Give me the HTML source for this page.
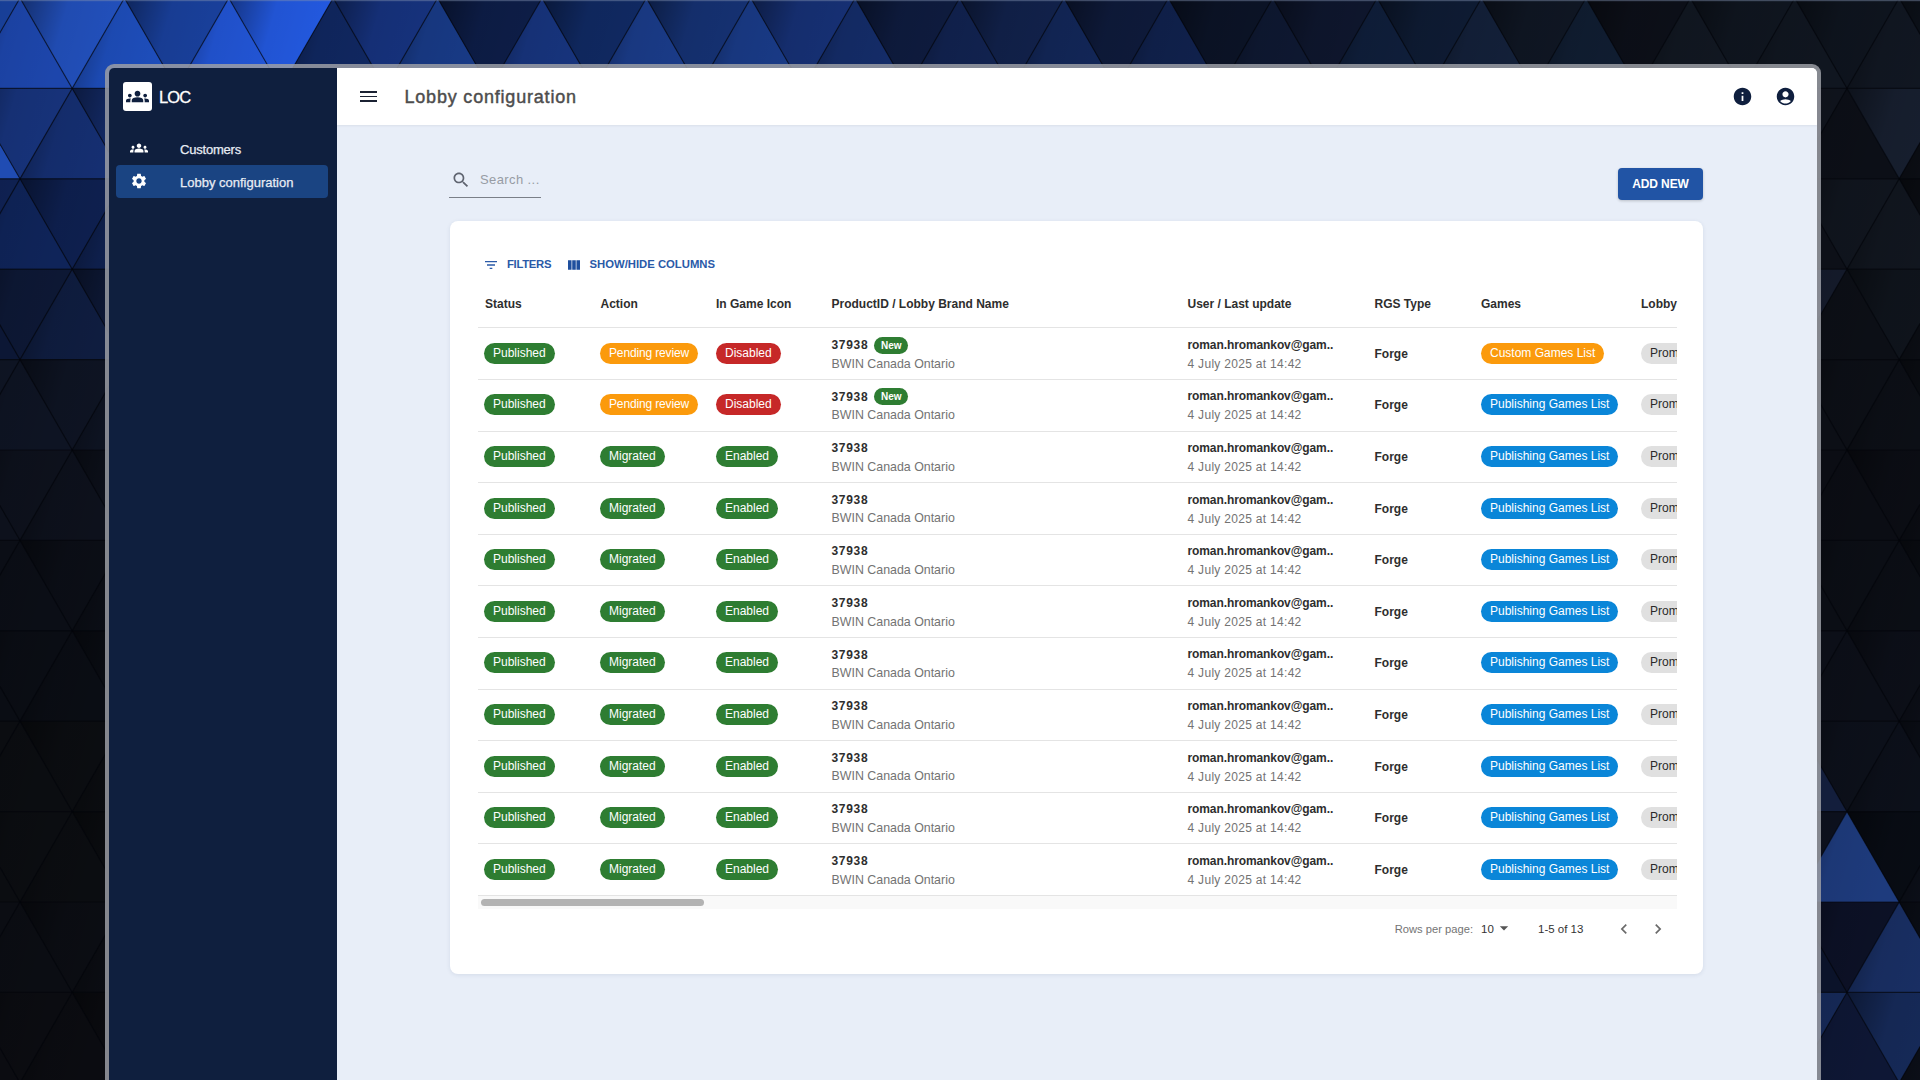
<!DOCTYPE html>
<html><head><meta charset="utf-8">
<style>
*{box-sizing:border-box;margin:0;padding:0}
html,body{width:1920px;height:1080px;overflow:hidden;background:#0b0f18;font-family:"Liberation Sans",sans-serif}
#bg{position:absolute;left:0;top:0;width:1920px;height:1080px}
.abs{position:absolute}
#win{position:absolute;left:105px;top:64px;width:1716px;height:1030px;border:4px solid rgba(155,158,165,.85);border-radius:9px;overflow:hidden;background:#e8eef8;background-clip:padding-box}
#side{position:absolute;left:0;top:0;width:228px;height:1030px;background:#0f1f3e}
#hdr{position:absolute;left:228px;top:0;width:1480px;height:57px;background:#fff;box-shadow:0 1px 2px rgba(30,40,60,.07)}
.t{position:absolute;white-space:nowrap;line-height:1}
.chip{position:absolute;height:21px;border-radius:11px;color:#fff;font-size:12px;line-height:21px;padding:0 9px;white-space:nowrap}
.g{background:#2e7d32}
.o{background:#fb9a0c}
.r{background:#c62828}
.b{background:#0a86d8}
.gr{background:#e0e0e0;color:#2a2a2a}
.hd{font-weight:bold;font-size:12px;color:#2e2e2e}
.line{position:absolute;left:28px;width:1198px;height:1px;background:#e6e6e6}

#main{position:absolute;left:0;top:0}
#card{position:absolute;left:341px;top:153px;width:1253px;height:753px;background:#fff;border-radius:8px;box-shadow:0 1px 4px rgba(40,60,100,.10)}
.row{position:absolute;left:0;width:1227px;height:51.6px}
.row .chip{top:15.6px}
.pid{position:absolute;left:381.5px;top:11.7px;font-size:12px;font-weight:bold;color:#2e2e2e;line-height:1;white-space:nowrap;letter-spacing:.7px}
.new{display:inline-block;vertical-align:top;margin-left:6.1px;margin-top:-2.3px;height:17px;line-height:17px;padding:0 6.5px;letter-spacing:0;border-radius:9px;background:#2e7d32;color:#fff;font-size:10px;font-weight:bold}
.bn{position:absolute;left:381.5px;top:30.4px;font-size:12.4px;color:#737373;line-height:1;white-space:nowrap}
.em{position:absolute;left:737.5px;top:11.5px;font-size:12px;font-weight:bold;color:#2e2e2e;line-height:1;white-space:nowrap;letter-spacing:-.1px}
.dt{position:absolute;left:737.5px;top:30.5px;font-size:12px;color:#737373;line-height:1;white-space:nowrap;letter-spacing:.3px}
.fg{position:absolute;left:924.5px;top:20.5px;font-size:12px;font-weight:bold;color:#2e2e2e;line-height:1;white-space:nowrap}
#clip{position:absolute;left:28px;top:0;width:1199px;height:700px;overflow:hidden}
#clip .row{left:-28px}
.row::before{content:'';position:absolute;left:0;right:0;top:0;height:1px;background:#e4e4e4}
</style></head><body>
<svg id="bg" width="1920" height="1080"><defs><linearGradient id="sh" x1="0" y1="0" x2="1" y2="0.25"><stop offset="0" stop-color="#000" stop-opacity=".42"/><stop offset=".45" stop-color="#000" stop-opacity=".06"/><stop offset="1" stop-color="#000" stop-opacity="0"/></linearGradient></defs><g><polygon points="-84.4,-2.0 20.0,-2.0 -32.2,88.4" fill="#18409a"/><polygon points="-84.4,-2.0 20.0,-2.0 -32.2,88.4" fill="url(#sh)"/>
<polygon points="20.0,-2.0 72.2,88.4 -32.2,88.4" fill="#1d46ac"/><polygon points="20.0,-2.0 72.2,88.4 -32.2,88.4" fill="url(#sh)"/>
<polygon points="20.0,-2.0 124.4,-2.0 72.2,88.4" fill="#2250bc"/><polygon points="20.0,-2.0 124.4,-2.0 72.2,88.4" fill="url(#sh)"/>
<polygon points="124.4,-2.0 176.6,88.4 72.2,88.4" fill="#1e4ebc"/><polygon points="124.4,-2.0 176.6,88.4 72.2,88.4" fill="url(#sh)"/>
<polygon points="124.4,-2.0 228.8,-2.0 176.6,88.4" fill="#19409c"/><polygon points="124.4,-2.0 228.8,-2.0 176.6,88.4" fill="url(#sh)"/>
<polygon points="228.8,-2.0 281.0,88.4 176.6,88.4" fill="#2255d5"/><polygon points="228.8,-2.0 281.0,88.4 176.6,88.4" fill="url(#sh)"/>
<polygon points="228.8,-2.0 333.2,-2.0 281.0,88.4" fill="#2359e0"/><polygon points="228.8,-2.0 333.2,-2.0 281.0,88.4" fill="url(#sh)"/>
<polygon points="333.2,-2.0 385.4,88.4 281.0,88.4" fill="#102760"/><polygon points="333.2,-2.0 385.4,88.4 281.0,88.4" fill="url(#sh)"/>
<polygon points="333.2,-2.0 437.6,-2.0 385.4,88.4" fill="#16327d"/><polygon points="333.2,-2.0 437.6,-2.0 385.4,88.4" fill="url(#sh)"/>
<polygon points="437.6,-2.0 489.8,88.4 385.4,88.4" fill="#183a86"/><polygon points="437.6,-2.0 489.8,88.4 385.4,88.4" fill="url(#sh)"/>
<polygon points="437.6,-2.0 542.0,-2.0 489.8,88.4" fill="#0d1d47"/><polygon points="437.6,-2.0 542.0,-2.0 489.8,88.4" fill="url(#sh)"/>
<polygon points="542.0,-2.0 594.2,88.4 489.8,88.4" fill="#17347d"/><polygon points="542.0,-2.0 594.2,88.4 489.8,88.4" fill="url(#sh)"/>
<polygon points="542.0,-2.0 646.4,-2.0 594.2,88.4" fill="#102962"/><polygon points="542.0,-2.0 646.4,-2.0 594.2,88.4" fill="url(#sh)"/>
<polygon points="646.4,-2.0 698.6,88.4 594.2,88.4" fill="#1a3b88"/><polygon points="646.4,-2.0 698.6,88.4 594.2,88.4" fill="url(#sh)"/>
<polygon points="646.4,-2.0 750.8,-2.0 698.6,88.4" fill="#153172"/><polygon points="646.4,-2.0 750.8,-2.0 698.6,88.4" fill="url(#sh)"/>
<polygon points="750.8,-2.0 803.0,88.4 698.6,88.4" fill="#193a86"/><polygon points="750.8,-2.0 803.0,88.4 698.6,88.4" fill="url(#sh)"/>
<polygon points="750.8,-2.0 855.2,-2.0 803.0,88.4" fill="#163074"/><polygon points="750.8,-2.0 855.2,-2.0 803.0,88.4" fill="url(#sh)"/>
<polygon points="855.2,-2.0 907.4,88.4 803.0,88.4" fill="#142c68"/><polygon points="855.2,-2.0 907.4,88.4 803.0,88.4" fill="url(#sh)"/>
<polygon points="855.2,-2.0 959.6,-2.0 907.4,88.4" fill="#0e1b3e"/><polygon points="855.2,-2.0 959.6,-2.0 907.4,88.4" fill="url(#sh)"/>
<polygon points="959.6,-2.0 1011.8,88.4 907.4,88.4" fill="#11224f"/><polygon points="959.6,-2.0 1011.8,88.4 907.4,88.4" fill="url(#sh)"/>
<polygon points="959.6,-2.0 1064.0,-2.0 1011.8,88.4" fill="#11214a"/><polygon points="959.6,-2.0 1064.0,-2.0 1011.8,88.4" fill="url(#sh)"/>
<polygon points="1064.0,-2.0 1116.2,88.4 1011.8,88.4" fill="#122657"/><polygon points="1064.0,-2.0 1116.2,88.4 1011.8,88.4" fill="url(#sh)"/>
<polygon points="1064.0,-2.0 1168.4,-2.0 1116.2,88.4" fill="#0e1a3a"/><polygon points="1064.0,-2.0 1168.4,-2.0 1116.2,88.4" fill="url(#sh)"/>
<polygon points="1168.4,-2.0 1220.6,88.4 1116.2,88.4" fill="#10214c"/><polygon points="1168.4,-2.0 1220.6,88.4 1116.2,88.4" fill="url(#sh)"/>
<polygon points="1168.4,-2.0 1272.8,-2.0 1220.6,88.4" fill="#0b1326"/><polygon points="1168.4,-2.0 1272.8,-2.0 1220.6,88.4" fill="url(#sh)"/>
<polygon points="1272.8,-2.0 1325.0,88.4 1220.6,88.4" fill="#0e1831"/><polygon points="1272.8,-2.0 1325.0,88.4 1220.6,88.4" fill="url(#sh)"/>
<polygon points="1272.8,-2.0 1377.2,-2.0 1325.0,88.4" fill="#0e162d"/><polygon points="1272.8,-2.0 1377.2,-2.0 1325.0,88.4" fill="url(#sh)"/>
<polygon points="1377.2,-2.0 1429.4,88.4 1325.0,88.4" fill="#0f1e3a"/><polygon points="1377.2,-2.0 1429.4,88.4 1325.0,88.4" fill="url(#sh)"/>
<polygon points="1377.2,-2.0 1481.6,-2.0 1429.4,88.4" fill="#0e1b33"/><polygon points="1377.2,-2.0 1481.6,-2.0 1429.4,88.4" fill="url(#sh)"/>
<polygon points="1481.6,-2.0 1533.8,88.4 1429.4,88.4" fill="#132039"/><polygon points="1481.6,-2.0 1533.8,88.4 1429.4,88.4" fill="url(#sh)"/>
<polygon points="1481.6,-2.0 1586.0,-2.0 1533.8,88.4" fill="#0f1623"/><polygon points="1481.6,-2.0 1586.0,-2.0 1533.8,88.4" fill="url(#sh)"/>
<polygon points="1586.0,-2.0 1638.2,88.4 1533.8,88.4" fill="#101d31"/><polygon points="1586.0,-2.0 1638.2,88.4 1533.8,88.4" fill="url(#sh)"/>
<polygon points="1586.0,-2.0 1690.4,-2.0 1638.2,88.4" fill="#0c0f18"/><polygon points="1586.0,-2.0 1690.4,-2.0 1638.2,88.4" fill="url(#sh)"/>
<polygon points="1690.4,-2.0 1742.6,88.4 1638.2,88.4" fill="#111721"/><polygon points="1690.4,-2.0 1742.6,88.4 1638.2,88.4" fill="url(#sh)"/>
<polygon points="1690.4,-2.0 1794.8,-2.0 1742.6,88.4" fill="#0f151f"/><polygon points="1690.4,-2.0 1794.8,-2.0 1742.6,88.4" fill="url(#sh)"/>
<polygon points="1794.8,-2.0 1847.0,88.4 1742.6,88.4" fill="#101620"/><polygon points="1794.8,-2.0 1847.0,88.4 1742.6,88.4" fill="url(#sh)"/>
<polygon points="1794.8,-2.0 1899.2,-2.0 1847.0,88.4" fill="#0e141e"/><polygon points="1794.8,-2.0 1899.2,-2.0 1847.0,88.4" fill="url(#sh)"/>
<polygon points="1899.2,-2.0 1951.4,88.4 1847.0,88.4" fill="#111722"/><polygon points="1899.2,-2.0 1951.4,88.4 1847.0,88.4" fill="url(#sh)"/>
<polygon points="1899.2,-2.0 2003.6,-2.0 1951.4,88.4" fill="#0e141e"/><polygon points="1899.2,-2.0 2003.6,-2.0 1951.4,88.4" fill="url(#sh)"/>
<polygon points="-32.2,88.4 20.0,178.8 -84.4,178.8" fill="#204cb3"/><polygon points="-32.2,88.4 20.0,178.8 -84.4,178.8" fill="url(#sh)"/>
<polygon points="-32.2,88.4 72.2,88.4 20.0,178.8" fill="#17337b"/><polygon points="-32.2,88.4 72.2,88.4 20.0,178.8" fill="url(#sh)"/>
<polygon points="72.2,88.4 124.4,178.8 20.0,178.8" fill="#152f72"/><polygon points="72.2,88.4 124.4,178.8 20.0,178.8" fill="url(#sh)"/>
<polygon points="72.2,88.4 176.6,88.4 124.4,178.8" fill="#142c6b"/><polygon points="72.2,88.4 176.6,88.4 124.4,178.8" fill="url(#sh)"/>
<polygon points="1742.6,88.4 1847.0,88.4 1794.8,178.8" fill="#0f131c"/><polygon points="1742.6,88.4 1847.0,88.4 1794.8,178.8" fill="url(#sh)"/>
<polygon points="1847.0,88.4 1899.2,178.8 1794.8,178.8" fill="#0c0f17"/><polygon points="1847.0,88.4 1899.2,178.8 1794.8,178.8" fill="url(#sh)"/>
<polygon points="1847.0,88.4 1951.4,88.4 1899.2,178.8" fill="#171f2f"/><polygon points="1847.0,88.4 1951.4,88.4 1899.2,178.8" fill="url(#sh)"/>
<polygon points="1951.4,88.4 2003.6,178.8 1899.2,178.8" fill="#0c0f16"/><polygon points="1951.4,88.4 2003.6,178.8 1899.2,178.8" fill="url(#sh)"/>
<polygon points="-84.4,178.8 20.0,178.8 -32.2,269.2" fill="#0f2152"/><polygon points="-84.4,178.8 20.0,178.8 -32.2,269.2" fill="url(#sh)"/>
<polygon points="20.0,178.8 72.2,269.2 -32.2,269.2" fill="#0f2459"/><polygon points="20.0,178.8 72.2,269.2 -32.2,269.2" fill="url(#sh)"/>
<polygon points="20.0,178.8 124.4,178.8 72.2,269.2" fill="#0e2050"/><polygon points="20.0,178.8 124.4,178.8 72.2,269.2" fill="url(#sh)"/>
<polygon points="124.4,178.8 176.6,269.2 72.2,269.2" fill="#0f2150"/><polygon points="124.4,178.8 176.6,269.2 72.2,269.2" fill="url(#sh)"/>
<polygon points="1794.8,178.8 1847.0,269.2 1742.6,269.2" fill="#0d1018"/><polygon points="1794.8,178.8 1847.0,269.2 1742.6,269.2" fill="url(#sh)"/>
<polygon points="1794.8,178.8 1899.2,178.8 1847.0,269.2" fill="#10151e"/><polygon points="1794.8,178.8 1899.2,178.8 1847.0,269.2" fill="url(#sh)"/>
<polygon points="1899.2,178.8 1951.4,269.2 1847.0,269.2" fill="#11161f"/><polygon points="1899.2,178.8 1951.4,269.2 1847.0,269.2" fill="url(#sh)"/>
<polygon points="1899.2,178.8 2003.6,178.8 1951.4,269.2" fill="#0c0f16"/><polygon points="1899.2,178.8 2003.6,178.8 1951.4,269.2" fill="url(#sh)"/>
<polygon points="-32.2,269.2 20.0,359.6 -84.4,359.6" fill="#0c1735"/><polygon points="-32.2,269.2 20.0,359.6 -84.4,359.6" fill="url(#sh)"/>
<polygon points="-32.2,269.2 72.2,269.2 20.0,359.6" fill="#0d1835"/><polygon points="-32.2,269.2 72.2,269.2 20.0,359.6" fill="url(#sh)"/>
<polygon points="72.2,269.2 124.4,359.6 20.0,359.6" fill="#0f1d40"/><polygon points="72.2,269.2 124.4,359.6 20.0,359.6" fill="url(#sh)"/>
<polygon points="72.2,269.2 176.6,269.2 124.4,359.6" fill="#0e1a3a"/><polygon points="72.2,269.2 176.6,269.2 124.4,359.6" fill="url(#sh)"/>
<polygon points="1742.6,269.2 1847.0,269.2 1794.8,359.6" fill="#141a2a"/><polygon points="1742.6,269.2 1847.0,269.2 1794.8,359.6" fill="url(#sh)"/>
<polygon points="1847.0,269.2 1899.2,359.6 1794.8,359.6" fill="#0c0f16"/><polygon points="1847.0,269.2 1899.2,359.6 1794.8,359.6" fill="url(#sh)"/>
<polygon points="1847.0,269.2 1951.4,269.2 1899.2,359.6" fill="#0f141c"/><polygon points="1847.0,269.2 1951.4,269.2 1899.2,359.6" fill="url(#sh)"/>
<polygon points="1951.4,269.2 2003.6,359.6 1899.2,359.6" fill="#0c0f16"/><polygon points="1951.4,269.2 2003.6,359.6 1899.2,359.6" fill="url(#sh)"/>
<polygon points="-84.4,359.6 20.0,359.6 -32.2,450.0" fill="#0e1423"/><polygon points="-84.4,359.6 20.0,359.6 -32.2,450.0" fill="url(#sh)"/>
<polygon points="20.0,359.6 72.2,450.0 -32.2,450.0" fill="#0e1423"/><polygon points="20.0,359.6 72.2,450.0 -32.2,450.0" fill="url(#sh)"/>
<polygon points="20.0,359.6 124.4,359.6 72.2,450.0" fill="#0e1423"/><polygon points="20.0,359.6 124.4,359.6 72.2,450.0" fill="url(#sh)"/>
<polygon points="124.4,359.6 176.6,450.0 72.2,450.0" fill="#0e1423"/><polygon points="124.4,359.6 176.6,450.0 72.2,450.0" fill="url(#sh)"/>
<polygon points="1794.8,359.6 1847.0,450.0 1742.6,450.0" fill="#0c0f16"/><polygon points="1794.8,359.6 1847.0,450.0 1742.6,450.0" fill="url(#sh)"/>
<polygon points="1794.8,359.6 1899.2,359.6 1847.0,450.0" fill="#0c0f16"/><polygon points="1794.8,359.6 1899.2,359.6 1847.0,450.0" fill="url(#sh)"/>
<polygon points="1899.2,359.6 1951.4,450.0 1847.0,450.0" fill="#0c0f16"/><polygon points="1899.2,359.6 1951.4,450.0 1847.0,450.0" fill="url(#sh)"/>
<polygon points="1899.2,359.6 2003.6,359.6 1951.4,450.0" fill="#0c0f16"/><polygon points="1899.2,359.6 2003.6,359.6 1951.4,450.0" fill="url(#sh)"/>
<polygon points="-32.2,450.0 20.0,540.4 -84.4,540.4" fill="#0d111c"/><polygon points="-32.2,450.0 20.0,540.4 -84.4,540.4" fill="url(#sh)"/>
<polygon points="-32.2,450.0 72.2,450.0 20.0,540.4" fill="#0d111c"/><polygon points="-32.2,450.0 72.2,450.0 20.0,540.4" fill="url(#sh)"/>
<polygon points="72.2,450.0 124.4,540.4 20.0,540.4" fill="#0d111c"/><polygon points="72.2,450.0 124.4,540.4 20.0,540.4" fill="url(#sh)"/>
<polygon points="72.2,450.0 176.6,450.0 124.4,540.4" fill="#0d111c"/><polygon points="72.2,450.0 176.6,450.0 124.4,540.4" fill="url(#sh)"/>
<polygon points="1742.6,450.0 1847.0,450.0 1794.8,540.4" fill="#0b0d14"/><polygon points="1742.6,450.0 1847.0,450.0 1794.8,540.4" fill="url(#sh)"/>
<polygon points="1847.0,450.0 1899.2,540.4 1794.8,540.4" fill="#0b0d14"/><polygon points="1847.0,450.0 1899.2,540.4 1794.8,540.4" fill="url(#sh)"/>
<polygon points="1847.0,450.0 1951.4,450.0 1899.2,540.4" fill="#0b0d14"/><polygon points="1847.0,450.0 1951.4,450.0 1899.2,540.4" fill="url(#sh)"/>
<polygon points="1951.4,450.0 2003.6,540.4 1899.2,540.4" fill="#0b0d14"/><polygon points="1951.4,450.0 2003.6,540.4 1899.2,540.4" fill="url(#sh)"/>
<polygon points="-84.4,540.4 20.0,540.4 -32.2,630.8" fill="#0b0e16"/><polygon points="-84.4,540.4 20.0,540.4 -32.2,630.8" fill="url(#sh)"/>
<polygon points="20.0,540.4 72.2,630.8 -32.2,630.8" fill="#0b0e16"/><polygon points="20.0,540.4 72.2,630.8 -32.2,630.8" fill="url(#sh)"/>
<polygon points="20.0,540.4 124.4,540.4 72.2,630.8" fill="#0b0e16"/><polygon points="20.0,540.4 124.4,540.4 72.2,630.8" fill="url(#sh)"/>
<polygon points="124.4,540.4 176.6,630.8 72.2,630.8" fill="#0b0e16"/><polygon points="124.4,540.4 176.6,630.8 72.2,630.8" fill="url(#sh)"/>
<polygon points="1794.8,540.4 1847.0,630.8 1742.6,630.8" fill="#0b0e15"/><polygon points="1794.8,540.4 1847.0,630.8 1742.6,630.8" fill="url(#sh)"/>
<polygon points="1794.8,540.4 1899.2,540.4 1847.0,630.8" fill="#0b0e15"/><polygon points="1794.8,540.4 1899.2,540.4 1847.0,630.8" fill="url(#sh)"/>
<polygon points="1899.2,540.4 1951.4,630.8 1847.0,630.8" fill="#0b0e15"/><polygon points="1899.2,540.4 1951.4,630.8 1847.0,630.8" fill="url(#sh)"/>
<polygon points="1899.2,540.4 2003.6,540.4 1951.4,630.8" fill="#0b0e15"/><polygon points="1899.2,540.4 2003.6,540.4 1951.4,630.8" fill="url(#sh)"/>
<polygon points="-32.2,630.8 20.0,721.2 -84.4,721.2" fill="#0a0d14"/><polygon points="-32.2,630.8 20.0,721.2 -84.4,721.2" fill="url(#sh)"/>
<polygon points="-32.2,630.8 72.2,630.8 20.0,721.2" fill="#0a0d14"/><polygon points="-32.2,630.8 72.2,630.8 20.0,721.2" fill="url(#sh)"/>
<polygon points="72.2,630.8 124.4,721.2 20.0,721.2" fill="#0a0d14"/><polygon points="72.2,630.8 124.4,721.2 20.0,721.2" fill="url(#sh)"/>
<polygon points="72.2,630.8 176.6,630.8 124.4,721.2" fill="#0a0d14"/><polygon points="72.2,630.8 176.6,630.8 124.4,721.2" fill="url(#sh)"/>
<polygon points="1742.6,630.8 1847.0,630.8 1794.8,721.2" fill="#0c0f18"/><polygon points="1742.6,630.8 1847.0,630.8 1794.8,721.2" fill="url(#sh)"/>
<polygon points="1847.0,630.8 1899.2,721.2 1794.8,721.2" fill="#0c0f18"/><polygon points="1847.0,630.8 1899.2,721.2 1794.8,721.2" fill="url(#sh)"/>
<polygon points="1847.0,630.8 1951.4,630.8 1899.2,721.2" fill="#0c0f18"/><polygon points="1847.0,630.8 1951.4,630.8 1899.2,721.2" fill="url(#sh)"/>
<polygon points="1951.4,630.8 2003.6,721.2 1899.2,721.2" fill="#0c0f18"/><polygon points="1951.4,630.8 2003.6,721.2 1899.2,721.2" fill="url(#sh)"/>
<polygon points="-84.4,721.2 20.0,721.2 -32.2,811.6" fill="#0b0d11"/><polygon points="-84.4,721.2 20.0,721.2 -32.2,811.6" fill="url(#sh)"/>
<polygon points="20.0,721.2 72.2,811.6 -32.2,811.6" fill="#0b0d11"/><polygon points="20.0,721.2 72.2,811.6 -32.2,811.6" fill="url(#sh)"/>
<polygon points="20.0,721.2 124.4,721.2 72.2,811.6" fill="#0b0d11"/><polygon points="20.0,721.2 124.4,721.2 72.2,811.6" fill="url(#sh)"/>
<polygon points="124.4,721.2 176.6,811.6 72.2,811.6" fill="#0b0d11"/><polygon points="124.4,721.2 176.6,811.6 72.2,811.6" fill="url(#sh)"/>
<polygon points="1794.8,721.2 1847.0,811.6 1742.6,811.6" fill="#131e3c"/><polygon points="1794.8,721.2 1847.0,811.6 1742.6,811.6" fill="url(#sh)"/>
<polygon points="1794.8,721.2 1899.2,721.2 1847.0,811.6" fill="#0c101a"/><polygon points="1794.8,721.2 1899.2,721.2 1847.0,811.6" fill="url(#sh)"/>
<polygon points="1899.2,721.2 1951.4,811.6 1847.0,811.6" fill="#0c101a"/><polygon points="1899.2,721.2 1951.4,811.6 1847.0,811.6" fill="url(#sh)"/>
<polygon points="1899.2,721.2 2003.6,721.2 1951.4,811.6" fill="#0c101a"/><polygon points="1899.2,721.2 2003.6,721.2 1951.4,811.6" fill="url(#sh)"/>
<polygon points="-32.2,811.6 20.0,902.0 -84.4,902.0" fill="#0b0d11"/><polygon points="-32.2,811.6 20.0,902.0 -84.4,902.0" fill="url(#sh)"/>
<polygon points="-32.2,811.6 72.2,811.6 20.0,902.0" fill="#0b0d11"/><polygon points="-32.2,811.6 72.2,811.6 20.0,902.0" fill="url(#sh)"/>
<polygon points="72.2,811.6 124.4,902.0 20.0,902.0" fill="#0b0d11"/><polygon points="72.2,811.6 124.4,902.0 20.0,902.0" fill="url(#sh)"/>
<polygon points="72.2,811.6 176.6,811.6 124.4,902.0" fill="#0b0d11"/><polygon points="72.2,811.6 176.6,811.6 124.4,902.0" fill="url(#sh)"/>
<polygon points="1742.6,811.6 1847.0,811.6 1794.8,902.0" fill="#0c101d"/><polygon points="1742.6,811.6 1847.0,811.6 1794.8,902.0" fill="url(#sh)"/>
<polygon points="1847.0,811.6 1899.2,902.0 1794.8,902.0" fill="#1e3b7d"/><polygon points="1847.0,811.6 1899.2,902.0 1794.8,902.0" fill="url(#sh)"/>
<polygon points="1847.0,811.6 1951.4,811.6 1899.2,902.0" fill="#080c14"/><polygon points="1847.0,811.6 1951.4,811.6 1899.2,902.0" fill="url(#sh)"/>
<polygon points="1951.4,811.6 2003.6,902.0 1899.2,902.0" fill="#0c101a"/><polygon points="1951.4,811.6 2003.6,902.0 1899.2,902.0" fill="url(#sh)"/>
<polygon points="-84.4,902.0 20.0,902.0 -32.2,992.4" fill="#0b0d13"/><polygon points="-84.4,902.0 20.0,902.0 -32.2,992.4" fill="url(#sh)"/>
<polygon points="20.0,902.0 72.2,992.4 -32.2,992.4" fill="#0b0d13"/><polygon points="20.0,902.0 72.2,992.4 -32.2,992.4" fill="url(#sh)"/>
<polygon points="20.0,902.0 124.4,902.0 72.2,992.4" fill="#0b0d13"/><polygon points="20.0,902.0 124.4,902.0 72.2,992.4" fill="url(#sh)"/>
<polygon points="124.4,902.0 176.6,992.4 72.2,992.4" fill="#0b0d13"/><polygon points="124.4,902.0 176.6,992.4 72.2,992.4" fill="url(#sh)"/>
<polygon points="1794.8,902.0 1847.0,992.4 1742.6,992.4" fill="#0b132a"/><polygon points="1794.8,902.0 1847.0,992.4 1742.6,992.4" fill="url(#sh)"/>
<polygon points="1794.8,902.0 1899.2,902.0 1847.0,992.4" fill="#0c1126"/><polygon points="1794.8,902.0 1899.2,902.0 1847.0,992.4" fill="url(#sh)"/>
<polygon points="1899.2,902.0 1951.4,992.4 1847.0,992.4" fill="#192f64"/><polygon points="1899.2,902.0 1951.4,992.4 1847.0,992.4" fill="url(#sh)"/>
<polygon points="1899.2,902.0 2003.6,902.0 1951.4,992.4" fill="#0c101a"/><polygon points="1899.2,902.0 2003.6,902.0 1951.4,992.4" fill="url(#sh)"/>
<polygon points="-32.2,992.4 20.0,1082.8 -84.4,1082.8" fill="#0b0c11"/><polygon points="-32.2,992.4 20.0,1082.8 -84.4,1082.8" fill="url(#sh)"/>
<polygon points="-32.2,992.4 72.2,992.4 20.0,1082.8" fill="#0b0c11"/><polygon points="-32.2,992.4 72.2,992.4 20.0,1082.8" fill="url(#sh)"/>
<polygon points="72.2,992.4 124.4,1082.8 20.0,1082.8" fill="#0b0c11"/><polygon points="72.2,992.4 124.4,1082.8 20.0,1082.8" fill="url(#sh)"/>
<polygon points="72.2,992.4 176.6,992.4 124.4,1082.8" fill="#0b0c11"/><polygon points="72.2,992.4 176.6,992.4 124.4,1082.8" fill="url(#sh)"/>
<polygon points="1742.6,992.4 1847.0,992.4 1794.8,1082.8" fill="#152855"/><polygon points="1742.6,992.4 1847.0,992.4 1794.8,1082.8" fill="url(#sh)"/>
<polygon points="1847.0,992.4 1899.2,1082.8 1794.8,1082.8" fill="#0e1735"/><polygon points="1847.0,992.4 1899.2,1082.8 1794.8,1082.8" fill="url(#sh)"/>
<polygon points="1847.0,992.4 1951.4,992.4 1899.2,1082.8" fill="#162a59"/><polygon points="1847.0,992.4 1951.4,992.4 1899.2,1082.8" fill="url(#sh)"/>
<polygon points="1951.4,992.4 2003.6,1082.8 1899.2,1082.8" fill="#0c101a"/><polygon points="1951.4,992.4 2003.6,1082.8 1899.2,1082.8" fill="url(#sh)"/>
<polygon points="-84.4,1082.8 20.0,1082.8 -32.2,1173.2" fill="#0b0c11"/><polygon points="-84.4,1082.8 20.0,1082.8 -32.2,1173.2" fill="url(#sh)"/>
<polygon points="20.0,1082.8 72.2,1173.2 -32.2,1173.2" fill="#0b0c11"/><polygon points="20.0,1082.8 72.2,1173.2 -32.2,1173.2" fill="url(#sh)"/>
<polygon points="20.0,1082.8 124.4,1082.8 72.2,1173.2" fill="#0b0c11"/><polygon points="20.0,1082.8 124.4,1082.8 72.2,1173.2" fill="url(#sh)"/>
<polygon points="124.4,1082.8 176.6,1173.2 72.2,1173.2" fill="#0b0c11"/><polygon points="124.4,1082.8 176.6,1173.2 72.2,1173.2" fill="url(#sh)"/>
<polygon points="1794.8,1082.8 1847.0,1173.2 1742.6,1173.2" fill="#0e1735"/><polygon points="1794.8,1082.8 1847.0,1173.2 1742.6,1173.2" fill="url(#sh)"/>
<polygon points="1794.8,1082.8 1899.2,1082.8 1847.0,1173.2" fill="#162a59"/><polygon points="1794.8,1082.8 1899.2,1082.8 1847.0,1173.2" fill="url(#sh)"/>
<polygon points="1899.2,1082.8 1951.4,1173.2 1847.0,1173.2" fill="#162a59"/><polygon points="1899.2,1082.8 1951.4,1173.2 1847.0,1173.2" fill="url(#sh)"/>
<polygon points="1899.2,1082.8 2003.6,1082.8 1951.4,1173.2" fill="#0c101a"/><polygon points="1899.2,1082.8 2003.6,1082.8 1951.4,1173.2" fill="url(#sh)"/></g><g stroke="#03050a" stroke-opacity=".6" stroke-width="1.2"><line x1="0" y1="-2.0" x2="1920" y2="-2.0"/>
<line x1="0" y1="88.4" x2="1920" y2="88.4"/>
<line x1="0" y1="178.8" x2="1920" y2="178.8"/>
<line x1="0" y1="269.2" x2="1920" y2="269.2"/>
<line x1="0" y1="359.6" x2="1920" y2="359.6"/>
<line x1="0" y1="450.0" x2="1920" y2="450.0"/>
<line x1="0" y1="540.4" x2="1920" y2="540.4"/>
<line x1="0" y1="630.8" x2="1920" y2="630.8"/>
<line x1="0" y1="721.2" x2="1920" y2="721.2"/>
<line x1="0" y1="811.6" x2="1920" y2="811.6"/>
<line x1="0" y1="902.0" x2="1920" y2="902.0"/>
<line x1="0" y1="992.4" x2="1920" y2="992.4"/>
<line x1="0" y1="1082.8" x2="1920" y2="1082.8"/>
<line x1="0" y1="1173.2" x2="1920" y2="1173.2"/>
<line x1="-2590.0" y1="-2.0" x2="-1954.8" y2="1098.0"/>
<line x1="-2590.0" y1="-2.0" x2="-3225.2" y2="1098.0"/>
<line x1="-2485.6" y1="-2.0" x2="-1850.4" y2="1098.0"/>
<line x1="-2485.6" y1="-2.0" x2="-3120.8" y2="1098.0"/>
<line x1="-2381.2" y1="-2.0" x2="-1746.0" y2="1098.0"/>
<line x1="-2381.2" y1="-2.0" x2="-3016.4" y2="1098.0"/>
<line x1="-2276.8" y1="-2.0" x2="-1641.6" y2="1098.0"/>
<line x1="-2276.8" y1="-2.0" x2="-2912.0" y2="1098.0"/>
<line x1="-2172.4" y1="-2.0" x2="-1537.2" y2="1098.0"/>
<line x1="-2172.4" y1="-2.0" x2="-2807.6" y2="1098.0"/>
<line x1="-2068.0" y1="-2.0" x2="-1432.8" y2="1098.0"/>
<line x1="-2068.0" y1="-2.0" x2="-2703.2" y2="1098.0"/>
<line x1="-1963.6" y1="-2.0" x2="-1328.4" y2="1098.0"/>
<line x1="-1963.6" y1="-2.0" x2="-2598.8" y2="1098.0"/>
<line x1="-1859.2" y1="-2.0" x2="-1224.0" y2="1098.0"/>
<line x1="-1859.2" y1="-2.0" x2="-2494.4" y2="1098.0"/>
<line x1="-1754.8" y1="-2.0" x2="-1119.6" y2="1098.0"/>
<line x1="-1754.8" y1="-2.0" x2="-2390.0" y2="1098.0"/>
<line x1="-1650.4" y1="-2.0" x2="-1015.2" y2="1098.0"/>
<line x1="-1650.4" y1="-2.0" x2="-2285.6" y2="1098.0"/>
<line x1="-1546.0" y1="-2.0" x2="-910.8" y2="1098.0"/>
<line x1="-1546.0" y1="-2.0" x2="-2181.2" y2="1098.0"/>
<line x1="-1441.6" y1="-2.0" x2="-806.4" y2="1098.0"/>
<line x1="-1441.6" y1="-2.0" x2="-2076.8" y2="1098.0"/>
<line x1="-1337.2" y1="-2.0" x2="-702.0" y2="1098.0"/>
<line x1="-1337.2" y1="-2.0" x2="-1972.4" y2="1098.0"/>
<line x1="-1232.8" y1="-2.0" x2="-597.6" y2="1098.0"/>
<line x1="-1232.8" y1="-2.0" x2="-1868.0" y2="1098.0"/>
<line x1="-1128.4" y1="-2.0" x2="-493.2" y2="1098.0"/>
<line x1="-1128.4" y1="-2.0" x2="-1763.6" y2="1098.0"/>
<line x1="-1024.0" y1="-2.0" x2="-388.8" y2="1098.0"/>
<line x1="-1024.0" y1="-2.0" x2="-1659.2" y2="1098.0"/>
<line x1="-919.6" y1="-2.0" x2="-284.4" y2="1098.0"/>
<line x1="-919.6" y1="-2.0" x2="-1554.8" y2="1098.0"/>
<line x1="-815.2" y1="-2.0" x2="-180.0" y2="1098.0"/>
<line x1="-815.2" y1="-2.0" x2="-1450.4" y2="1098.0"/>
<line x1="-710.8" y1="-2.0" x2="-75.6" y2="1098.0"/>
<line x1="-710.8" y1="-2.0" x2="-1346.0" y2="1098.0"/>
<line x1="-606.4" y1="-2.0" x2="28.8" y2="1098.0"/>
<line x1="-606.4" y1="-2.0" x2="-1241.6" y2="1098.0"/>
<line x1="-502.0" y1="-2.0" x2="133.2" y2="1098.0"/>
<line x1="-502.0" y1="-2.0" x2="-1137.2" y2="1098.0"/>
<line x1="-397.6" y1="-2.0" x2="237.6" y2="1098.0"/>
<line x1="-397.6" y1="-2.0" x2="-1032.8" y2="1098.0"/>
<line x1="-293.2" y1="-2.0" x2="342.0" y2="1098.0"/>
<line x1="-293.2" y1="-2.0" x2="-928.4" y2="1098.0"/>
<line x1="-188.8" y1="-2.0" x2="446.4" y2="1098.0"/>
<line x1="-188.8" y1="-2.0" x2="-824.0" y2="1098.0"/>
<line x1="-84.4" y1="-2.0" x2="550.8" y2="1098.0"/>
<line x1="-84.4" y1="-2.0" x2="-719.6" y2="1098.0"/>
<line x1="20.0" y1="-2.0" x2="655.2" y2="1098.0"/>
<line x1="20.0" y1="-2.0" x2="-615.2" y2="1098.0"/>
<line x1="124.4" y1="-2.0" x2="759.6" y2="1098.0"/>
<line x1="124.4" y1="-2.0" x2="-510.8" y2="1098.0"/>
<line x1="228.8" y1="-2.0" x2="864.0" y2="1098.0"/>
<line x1="228.8" y1="-2.0" x2="-406.4" y2="1098.0"/>
<line x1="333.2" y1="-2.0" x2="968.4" y2="1098.0"/>
<line x1="333.2" y1="-2.0" x2="-302.0" y2="1098.0"/>
<line x1="437.6" y1="-2.0" x2="1072.8" y2="1098.0"/>
<line x1="437.6" y1="-2.0" x2="-197.6" y2="1098.0"/>
<line x1="542.0" y1="-2.0" x2="1177.2" y2="1098.0"/>
<line x1="542.0" y1="-2.0" x2="-93.2" y2="1098.0"/>
<line x1="646.4" y1="-2.0" x2="1281.6" y2="1098.0"/>
<line x1="646.4" y1="-2.0" x2="11.2" y2="1098.0"/>
<line x1="750.8" y1="-2.0" x2="1386.0" y2="1098.0"/>
<line x1="750.8" y1="-2.0" x2="115.6" y2="1098.0"/>
<line x1="855.2" y1="-2.0" x2="1490.4" y2="1098.0"/>
<line x1="855.2" y1="-2.0" x2="220.0" y2="1098.0"/>
<line x1="959.6" y1="-2.0" x2="1594.8" y2="1098.0"/>
<line x1="959.6" y1="-2.0" x2="324.4" y2="1098.0"/>
<line x1="1064.0" y1="-2.0" x2="1699.2" y2="1098.0"/>
<line x1="1064.0" y1="-2.0" x2="428.8" y2="1098.0"/>
<line x1="1168.4" y1="-2.0" x2="1803.6" y2="1098.0"/>
<line x1="1168.4" y1="-2.0" x2="533.2" y2="1098.0"/>
<line x1="1272.8" y1="-2.0" x2="1908.0" y2="1098.0"/>
<line x1="1272.8" y1="-2.0" x2="637.6" y2="1098.0"/>
<line x1="1377.2" y1="-2.0" x2="2012.4" y2="1098.0"/>
<line x1="1377.2" y1="-2.0" x2="742.0" y2="1098.0"/>
<line x1="1481.6" y1="-2.0" x2="2116.8" y2="1098.0"/>
<line x1="1481.6" y1="-2.0" x2="846.4" y2="1098.0"/>
<line x1="1586.0" y1="-2.0" x2="2221.2" y2="1098.0"/>
<line x1="1586.0" y1="-2.0" x2="950.8" y2="1098.0"/>
<line x1="1690.4" y1="-2.0" x2="2325.6" y2="1098.0"/>
<line x1="1690.4" y1="-2.0" x2="1055.2" y2="1098.0"/>
<line x1="1794.8" y1="-2.0" x2="2430.0" y2="1098.0"/>
<line x1="1794.8" y1="-2.0" x2="1159.6" y2="1098.0"/>
<line x1="1899.2" y1="-2.0" x2="2534.4" y2="1098.0"/>
<line x1="1899.2" y1="-2.0" x2="1264.0" y2="1098.0"/>
<line x1="2003.6" y1="-2.0" x2="2638.8" y2="1098.0"/>
<line x1="2003.6" y1="-2.0" x2="1368.4" y2="1098.0"/>
<line x1="2108.0" y1="-2.0" x2="2743.2" y2="1098.0"/>
<line x1="2108.0" y1="-2.0" x2="1472.8" y2="1098.0"/>
<line x1="2212.4" y1="-2.0" x2="2847.6" y2="1098.0"/>
<line x1="2212.4" y1="-2.0" x2="1577.2" y2="1098.0"/>
<line x1="2316.8" y1="-2.0" x2="2952.0" y2="1098.0"/>
<line x1="2316.8" y1="-2.0" x2="1681.6" y2="1098.0"/>
<line x1="2421.2" y1="-2.0" x2="3056.4" y2="1098.0"/>
<line x1="2421.2" y1="-2.0" x2="1786.0" y2="1098.0"/>
<line x1="2525.6" y1="-2.0" x2="3160.8" y2="1098.0"/>
<line x1="2525.6" y1="-2.0" x2="1890.4" y2="1098.0"/>
<line x1="2630.0" y1="-2.0" x2="3265.2" y2="1098.0"/>
<line x1="2630.0" y1="-2.0" x2="1994.8" y2="1098.0"/>
<line x1="2734.4" y1="-2.0" x2="3369.6" y2="1098.0"/>
<line x1="2734.4" y1="-2.0" x2="2099.2" y2="1098.0"/>
<line x1="2838.8" y1="-2.0" x2="3474.0" y2="1098.0"/>
<line x1="2838.8" y1="-2.0" x2="2203.6" y2="1098.0"/>
<line x1="2943.2" y1="-2.0" x2="3578.4" y2="1098.0"/>
<line x1="2943.2" y1="-2.0" x2="2308.0" y2="1098.0"/>
<line x1="3047.6" y1="-2.0" x2="3682.8" y2="1098.0"/>
<line x1="3047.6" y1="-2.0" x2="2412.4" y2="1098.0"/>
<line x1="3152.0" y1="-2.0" x2="3787.2" y2="1098.0"/>
<line x1="3152.0" y1="-2.0" x2="2516.8" y2="1098.0"/>
<line x1="3256.4" y1="-2.0" x2="3891.6" y2="1098.0"/>
<line x1="3256.4" y1="-2.0" x2="2621.2" y2="1098.0"/>
<line x1="3360.8" y1="-2.0" x2="3996.0" y2="1098.0"/>
<line x1="3360.8" y1="-2.0" x2="2725.6" y2="1098.0"/>
<line x1="3465.2" y1="-2.0" x2="4100.4" y2="1098.0"/>
<line x1="3465.2" y1="-2.0" x2="2830.0" y2="1098.0"/>
<line x1="3569.6" y1="-2.0" x2="4204.8" y2="1098.0"/>
<line x1="3569.6" y1="-2.0" x2="2934.4" y2="1098.0"/>
<line x1="3674.0" y1="-2.0" x2="4309.2" y2="1098.0"/>
<line x1="3674.0" y1="-2.0" x2="3038.8" y2="1098.0"/>
<line x1="3778.4" y1="-2.0" x2="4413.6" y2="1098.0"/>
<line x1="3778.4" y1="-2.0" x2="3143.2" y2="1098.0"/>
<line x1="3882.8" y1="-2.0" x2="4518.0" y2="1098.0"/>
<line x1="3882.8" y1="-2.0" x2="3247.6" y2="1098.0"/>
<line x1="3987.2" y1="-2.0" x2="4622.4" y2="1098.0"/>
<line x1="3987.2" y1="-2.0" x2="3352.0" y2="1098.0"/>
<line x1="4091.6" y1="-2.0" x2="4726.8" y2="1098.0"/>
<line x1="4091.6" y1="-2.0" x2="3456.4" y2="1098.0"/></g><rect x="0" y="0" width="1920" height="1.2" fill="#8090b0" fill-opacity=".45"/></svg>
<div id="win">
  <div id="side">
    <div class="abs" style="left:14px;top:14px;width:29px;height:29px;background:#fff;border-radius:3px">
      <svg class="abs" style="left:3px;top:3px" width="23" height="23" viewBox="0 0 24 24"><path fill="#0f1f3e" d="M12 12.75c1.63 0 3.07.39 4.24.9 1.08.48 1.76 1.56 1.76 2.73V18H6v-1.61c0-1.18.68-2.26 1.76-2.73 1.17-.52 2.61-.91 4.24-.91zM4 13c1.1 0 2-.9 2-2s-.9-2-2-2-2 .9-2 2 .9 2 2 2zm1.13 1.1c-.37-.06-.74-.1-1.13-.1-.99 0-1.93.21-2.78.58C.48 14.9 0 15.62 0 16.43V18h4.5v-1.61c0-.83.23-1.61.63-2.29zM20 13c1.1 0 2-.9 2-2s-.9-2-2-2-2 .9-2 2 .9 2 2 2zm4 3.43c0-.81-.48-1.53-1.22-1.85-.85-.37-1.79-.58-2.78-.58-.39 0-.76.04-1.13.1.4.68.63 1.46.63 2.29V18H24v-1.57zM12 6c1.66 0 3 1.34 3 3s-1.34 3-3 3-3-1.34-3-3 1.34-3 3-3z"/></svg>
    </div>
    <div class="t" style="left:50px;top:21px;font-size:16.5px;color:#fff;letter-spacing:-.9px;-webkit-text-stroke:.3px #fff">LOC</div>
    <svg class="abs" style="left:21px;top:71px" width="18" height="18" viewBox="0 0 24 24"><path fill="#fff" d="M12 12.75c1.63 0 3.07.39 4.24.9 1.08.48 1.76 1.56 1.76 2.73V18H6v-1.61c0-1.18.68-2.26 1.76-2.73 1.17-.52 2.61-.91 4.24-.91zM4 13c1.1 0 2-.9 2-2s-.9-2-2-2-2 .9-2 2 .9 2 2 2zm1.13 1.1c-.37-.06-.74-.1-1.13-.1-.99 0-1.93.21-2.78.58C.48 14.9 0 15.62 0 16.43V18h4.5v-1.61c0-.83.23-1.61.63-2.29zM20 13c1.1 0 2-.9 2-2s-.9-2-2-2-2 .9-2 2 .9 2 2 2zm4 3.43c0-.81-.48-1.53-1.22-1.85-.85-.37-1.79-.58-2.78-.58-.39 0-.76.04-1.13.1.4.68.63 1.46.63 2.29V18H24v-1.57zM12 6c1.66 0 3 1.34 3 3s-1.34 3-3 3-3-1.34-3-3 1.34-3 3-3z"/></svg>
    <div class="t" style="left:71px;top:74.5px;font-size:13px;color:#e8ecf4;letter-spacing:-.2px;-webkit-text-stroke:.25px #e8ecf4">Customers</div>
    <div class="abs" style="left:7px;top:97px;width:212px;height:33px;background:#1a4482;border-radius:4px"></div>
    <svg class="abs" style="left:21px;top:104px" width="18" height="18" viewBox="0 0 24 24"><path fill="#fff" d="M19.14 12.94c.04-.3.06-.61.06-.94 0-.32-.02-.64-.07-.94l2.03-1.58c.18-.14.23-.41.12-.61l-1.92-3.32c-.12-.22-.37-.29-.59-.22l-2.39.96c-.5-.38-1.03-.7-1.62-.94l-.36-2.54c-.04-.24-.24-.41-.48-.41h-3.84c-.24 0-.43.17-.47.41l-.36 2.54c-.59.24-1.13.57-1.62.94l-2.39-.96c-.22-.08-.47 0-.59.22L2.74 8.87c-.12.21-.08.47.12.61l2.03 1.58c-.05.3-.09.63-.09.94s.02.64.07.94l-2.03 1.58c-.18.14-.23.41-.12.61l1.92 3.32c.12.22.37.29.59.22l2.39-.96c.5.38 1.03.7 1.62.94l.36 2.54c.05.24.24.41.48.41h3.84c.24 0 .44-.17.47-.41l.36-2.54c.59-.24 1.13-.56 1.62-.94l2.39.96c.22.08.47 0 .59-.22l1.92-3.32c.12-.22.07-.47-.12-.61l-2.01-1.58zM12 15.6c-1.98 0-3.6-1.62-3.6-3.6s1.62-3.6 3.6-3.6 3.6 1.62 3.6 3.6-1.62 3.6-3.6 3.6z"/></svg>
    <div class="t" style="left:71px;top:107.5px;font-size:13px;color:#e8ecf4;-webkit-text-stroke:.25px #e8ecf4">Lobby configuration</div>
  </div>

  <div id="main">
    <svg class="abs" style="left:342px;top:102px" width="20" height="20" viewBox="0 0 24 24"><path fill="#5f6470" d="M15.5 14h-.79l-.28-.27C15.41 12.59 16 11.11 16 9.5 16 5.91 13.09 3 9.5 3S3 5.91 3 9.5 5.91 16 9.5 16c1.61 0 3.09-.59 4.23-1.57l.27.28v.79l5 4.99L20.49 19l-4.99-5zm-6 0C7.01 14 5 11.99 5 9.5S7.01 5 9.5 5 14 7.01 14 9.5 11.99 14 9.5 14z"/></svg>
    <div class="t" style="left:371px;top:105px;font-size:13px;color:#979ca4;letter-spacing:.4px">Search ...</div>
    <div class="abs" style="left:340px;top:129px;width:92px;height:1px;background:#7a7f88"></div>
    <div class="abs" style="left:1509px;top:100px;width:85px;height:32px;background:#2154a5;border-radius:4px;box-shadow:0 1px 3px rgba(0,0,0,.2)"></div>
    <div class="t" style="left:1509px;top:110px;width:85px;text-align:center;font-size:12px;font-weight:bold;color:#fff;letter-spacing:-.1px">ADD NEW</div>
    <div id="card">
      <svg class="abs" style="left:33px;top:36px" width="16" height="16" viewBox="0 0 24 24"><path fill="#2a5aa8" d="M10 18h4v-2h-4v2zM3 6v2h18V6H3zm3 7h12v-2H6v2z"/></svg>
      <div class="t" style="left:57px;top:37.8px;font-size:11.3px;font-weight:bold;color:#2a5aa8;letter-spacing:-.3px">FILTERS</div>
      <svg class="abs" style="left:116.2px;top:35.9px" width="16" height="16" viewBox="0 0 24 24"><path fill="#1f4f9e" d="M14.67 5v14H9.33V5h5.34zm1 14H21V5h-5.33v14zm-7.34 0V5H3v14h5.33z"/></svg>
      <div class="t" style="left:139.5px;top:37.8px;font-size:11.3px;font-weight:bold;color:#2a5aa8;letter-spacing:0">SHOW/HIDE COLUMNS</div>
      <div class="t hd" style="left:35px;top:77px">Status</div>
      <div class="t hd" style="left:150.5px;top:77px">Action</div>
      <div class="t hd" style="left:266px;top:77px">In Game Icon</div>
      <div class="t hd" style="left:381.5px;top:77px">ProductID / Lobby Brand Name</div>
      <div class="t hd" style="left:737.5px;top:77px">User / Last update</div>
      <div class="t hd" style="left:924.5px;top:77px">RGS Type</div>
      <div class="t hd" style="left:1031px;top:77px">Games</div>
      <div class="t hd" style="left:1191px;top:77px">Lobby</div>

      <div class="abs" style="left:28px;top:673.9px;width:1199px;height:1px;background:#e4e4e4"></div>
      <div class="abs" style="left:28px;top:674.9px;width:1199px;height:13px;background:#f9f9f9"></div>
      <div class="abs" style="left:31px;top:678px;width:223px;height:6.5px;background:#b3b3b3;border-radius:4px"></div>
      <div class="t" style="left:944.7px;top:702.5px;font-size:11.2px;color:#747474">Rows per page:</div>
      <div class="t" style="left:1031px;top:702.5px;font-size:11.5px;color:#333">10</div>
      <svg class="abs" style="left:1043.5px;top:697px" width="20" height="20" viewBox="0 0 24 24"><path fill="#555" d="M7 10l5 5 5-5z"/></svg>
      <div class="t" style="left:1088px;top:702.5px;font-size:11.5px;color:#333">1-5 of 13</div>
      <svg class="abs" style="left:1164px;top:698px" width="20" height="20" viewBox="0 0 24 24"><path fill="#6a6a6a" d="M15.41 7.41L14 6l-6 6 6 6 1.41-1.41L10.83 12z"/></svg>
      <svg class="abs" style="left:1198px;top:698px" width="20" height="20" viewBox="0 0 24 24"><path fill="#6a6a6a" d="M10 6L8.59 7.41 13.17 12l-4.58 4.59L10 18l6-6z"/></svg>
      <div id="clip">
<div class="row" style="top:106.3px">
 <div class="chip g" style="left:34px">Published</div>
 <div class="chip o" style="left:150px;letter-spacing:-.15px">Pending review</div>
 <div class="chip r" style="left:266px">Disabled</div>
 <div class="pid">37938<span class=new>New</span></div>
 <div class="bn">BWIN Canada Ontario</div>
 <div class="em">roman.hromankov@gam..</div>
 <div class="dt">4 July 2025 at 14:42</div>
 <div class="fg">Forge</div>
 <div class="chip o" style="left:1031px">Custom Games List</div>
 <div class="chip gr" style="left:1191px">Promo</div>
</div>
<div class="row" style="top:157.9px">
 <div class="chip g" style="left:34px">Published</div>
 <div class="chip o" style="left:150px;letter-spacing:-.15px">Pending review</div>
 <div class="chip r" style="left:266px">Disabled</div>
 <div class="pid">37938<span class=new>New</span></div>
 <div class="bn">BWIN Canada Ontario</div>
 <div class="em">roman.hromankov@gam..</div>
 <div class="dt">4 July 2025 at 14:42</div>
 <div class="fg">Forge</div>
 <div class="chip b" style="left:1031px">Publishing Games List</div>
 <div class="chip gr" style="left:1191px">Promo</div>
</div>
<div class="row" style="top:209.5px">
 <div class="chip g" style="left:34px">Published</div>
 <div class="chip g" style="left:150px">Migrated</div>
 <div class="chip g" style="left:266px">Enabled</div>
 <div class="pid">37938</div>
 <div class="bn">BWIN Canada Ontario</div>
 <div class="em">roman.hromankov@gam..</div>
 <div class="dt">4 July 2025 at 14:42</div>
 <div class="fg">Forge</div>
 <div class="chip b" style="left:1031px">Publishing Games List</div>
 <div class="chip gr" style="left:1191px">Promo</div>
</div>
<div class="row" style="top:261.1px">
 <div class="chip g" style="left:34px">Published</div>
 <div class="chip g" style="left:150px">Migrated</div>
 <div class="chip g" style="left:266px">Enabled</div>
 <div class="pid">37938</div>
 <div class="bn">BWIN Canada Ontario</div>
 <div class="em">roman.hromankov@gam..</div>
 <div class="dt">4 July 2025 at 14:42</div>
 <div class="fg">Forge</div>
 <div class="chip b" style="left:1031px">Publishing Games List</div>
 <div class="chip gr" style="left:1191px">Promo</div>
</div>
<div class="row" style="top:312.7px">
 <div class="chip g" style="left:34px">Published</div>
 <div class="chip g" style="left:150px">Migrated</div>
 <div class="chip g" style="left:266px">Enabled</div>
 <div class="pid">37938</div>
 <div class="bn">BWIN Canada Ontario</div>
 <div class="em">roman.hromankov@gam..</div>
 <div class="dt">4 July 2025 at 14:42</div>
 <div class="fg">Forge</div>
 <div class="chip b" style="left:1031px">Publishing Games List</div>
 <div class="chip gr" style="left:1191px">Promo</div>
</div>
<div class="row" style="top:364.3px">
 <div class="chip g" style="left:34px">Published</div>
 <div class="chip g" style="left:150px">Migrated</div>
 <div class="chip g" style="left:266px">Enabled</div>
 <div class="pid">37938</div>
 <div class="bn">BWIN Canada Ontario</div>
 <div class="em">roman.hromankov@gam..</div>
 <div class="dt">4 July 2025 at 14:42</div>
 <div class="fg">Forge</div>
 <div class="chip b" style="left:1031px">Publishing Games List</div>
 <div class="chip gr" style="left:1191px">Promo</div>
</div>
<div class="row" style="top:415.9px">
 <div class="chip g" style="left:34px">Published</div>
 <div class="chip g" style="left:150px">Migrated</div>
 <div class="chip g" style="left:266px">Enabled</div>
 <div class="pid">37938</div>
 <div class="bn">BWIN Canada Ontario</div>
 <div class="em">roman.hromankov@gam..</div>
 <div class="dt">4 July 2025 at 14:42</div>
 <div class="fg">Forge</div>
 <div class="chip b" style="left:1031px">Publishing Games List</div>
 <div class="chip gr" style="left:1191px">Promo</div>
</div>
<div class="row" style="top:467.5px">
 <div class="chip g" style="left:34px">Published</div>
 <div class="chip g" style="left:150px">Migrated</div>
 <div class="chip g" style="left:266px">Enabled</div>
 <div class="pid">37938</div>
 <div class="bn">BWIN Canada Ontario</div>
 <div class="em">roman.hromankov@gam..</div>
 <div class="dt">4 July 2025 at 14:42</div>
 <div class="fg">Forge</div>
 <div class="chip b" style="left:1031px">Publishing Games List</div>
 <div class="chip gr" style="left:1191px">Promo</div>
</div>
<div class="row" style="top:519.1px">
 <div class="chip g" style="left:34px">Published</div>
 <div class="chip g" style="left:150px">Migrated</div>
 <div class="chip g" style="left:266px">Enabled</div>
 <div class="pid">37938</div>
 <div class="bn">BWIN Canada Ontario</div>
 <div class="em">roman.hromankov@gam..</div>
 <div class="dt">4 July 2025 at 14:42</div>
 <div class="fg">Forge</div>
 <div class="chip b" style="left:1031px">Publishing Games List</div>
 <div class="chip gr" style="left:1191px">Promo</div>
</div>
<div class="row" style="top:570.7px">
 <div class="chip g" style="left:34px">Published</div>
 <div class="chip g" style="left:150px">Migrated</div>
 <div class="chip g" style="left:266px">Enabled</div>
 <div class="pid">37938</div>
 <div class="bn">BWIN Canada Ontario</div>
 <div class="em">roman.hromankov@gam..</div>
 <div class="dt">4 July 2025 at 14:42</div>
 <div class="fg">Forge</div>
 <div class="chip b" style="left:1031px">Publishing Games List</div>
 <div class="chip gr" style="left:1191px">Promo</div>
</div>
<div class="row" style="top:622.3px">
 <div class="chip g" style="left:34px">Published</div>
 <div class="chip g" style="left:150px">Migrated</div>
 <div class="chip g" style="left:266px">Enabled</div>
 <div class="pid">37938</div>
 <div class="bn">BWIN Canada Ontario</div>
 <div class="em">roman.hromankov@gam..</div>
 <div class="dt">4 July 2025 at 14:42</div>
 <div class="fg">Forge</div>
 <div class="chip b" style="left:1031px">Publishing Games List</div>
 <div class="chip gr" style="left:1191px">Promo</div>
</div>
      </div>
    </div>
  </div>
  <div id="hdr">
    <div class="abs" style="left:23.3px;top:23.2px;width:16.5px;height:1.9px;background:#1b2233"></div><div class="abs" style="left:23.3px;top:27.6px;width:16.5px;height:1.9px;background:#1b2233"></div><div class="abs" style="left:23.3px;top:32px;width:16.5px;height:1.9px;background:#1b2233"></div>
    <div class="t" style="left:67.5px;top:20px;font-size:18px;color:#4d4d4d;letter-spacing:.8px;-webkit-text-stroke:.45px #4d4d4d">Lobby configuration</div>
    <svg class="abs" style="left:1395px;top:17.75px" width="21" height="21" viewBox="0 0 24 24"><path fill="#0f1f3e" d="M12 2C6.48 2 2 6.48 2 12s4.48 10 10 10 10-4.48 10-10S17.52 2 12 2zm1 15h-2v-6h2v6zm0-8h-2V7h2v2z"/></svg>
    <svg class="abs" style="left:1437.5px;top:17.75px" width="21" height="21" viewBox="0 0 24 24"><path fill="#0f1f3e" d="M12 2C6.48 2 2 6.48 2 12s4.48 10 10 10 10-4.48 10-10S17.52 2 12 2zm0 4c1.93 0 3.5 1.57 3.5 3.5S13.93 13 12 13s-3.5-1.57-3.5-3.5S10.07 6 12 6zm0 14c-2.03 0-4.43-.82-6.14-2.88C7.55 15.8 9.68 15 12 15s4.45.8 6.14 2.12C16.43 19.18 14.03 20 12 20z"/></svg>
  </div>
</div>
</body></html>
